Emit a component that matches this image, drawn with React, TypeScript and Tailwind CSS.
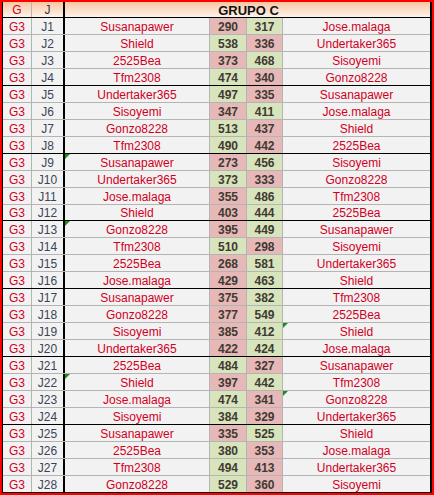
import React from "react";

type Row = [string, string, number, number, string, number];
// last field: triangle flags 1 = name1, 2 = name2
const rows: Row[] = [
  ["J1", "Susanapawer", 290, 317, "Jose.malaga", 0],
  ["J2", "Shield", 538, 336, "Undertaker365", 0],
  ["J3", "2525Bea", 373, 468, "Sisoyemi", 0],
  ["J4", "Tfm2308", 474, 340, "Gonzo8228", 0],
  ["J5", "Undertaker365", 497, 335, "Susanapawer", 0],
  ["J6", "Sisoyemi", 347, 411, "Jose.malaga", 0],
  ["J7", "Gonzo8228", 513, 437, "Shield", 0],
  ["J8", "Tfm2308", 490, 442, "2525Bea", 0],
  ["J9", "Susanapawer", 273, 456, "Sisoyemi", 1],
  ["J10", "Undertaker365", 373, 333, "Gonzo8228", 0],
  ["J11", "Jose.malaga", 355, 486, "Tfm2308", 0],
  ["J12", "Shield", 403, 444, "2525Bea", 0],
  ["J13", "Gonzo8228", 395, 449, "Susanapawer", 1],
  ["J14", "Tfm2308", 510, 298, "Sisoyemi", 0],
  ["J15", "2525Bea", 268, 581, "Undertaker365", 0],
  ["J16", "Jose.malaga", 429, 463, "Shield", 0],
  ["J17", "Susanapawer", 375, 382, "Tfm2308", 0],
  ["J18", "Gonzo8228", 377, 549, "2525Bea", 0],
  ["J19", "Sisoyemi", 385, 412, "Shield", 2],
  ["J20", "Undertaker365", 422, 424, "Jose.malaga", 0],
  ["J21", "2525Bea", 484, 327, "Susanapawer", 0],
  ["J22", "Shield", 397, 442, "Tfm2308", 1],
  ["J23", "Jose.malaga", 474, 341, "Gonzo8228", 2],
  ["J24", "Sisoyemi", 384, 329, "Undertaker365", 0],
  ["J25", "Susanapawer", 335, 525, "Shield", 0],
  ["J26", "2525Bea", 380, 353, "Jose.malaga", 0],
  ["J27", "Tfm2308", 494, 413, "Undertaker365", 0],
  ["J28", "Gonzo8228", 529, 360, "Sisoyemi", 0],
];

const Tri = () => (
  <span className="absolute left-0 top-0 w-0 h-0 border-t-[5px] border-r-[5px] border-t-[#1f8a1f] border-r-transparent" />
);

export default function App() {
  return (
    <div
      className="w-[434px] h-[495px] overflow-hidden bg-[#f2f2f2] border-2 border-[#ff0000]"
      style={{ fontFamily: '"Liberation Sans", Arial, sans-serif' }}
    >
      <div className="h-full border-l border-r-2 border-b border-black flex flex-col">
        {/* header */}
        <div className="flex h-[16px] shrink-0 border-b border-black bg-gradient-to-b from-[#f8c6a2] to-[#fdf3ec] text-[12px] leading-none">
          <div className="w-[29px] shrink-0 border-r border-[#b4b4b4] flex items-center justify-center text-[#d0001e] pt-[1px]">G</div>
          <div className="w-[33px] shrink-0 border-r-2 border-black flex items-center justify-center text-[#2f3a48] pt-[1px]">J</div>
          <div className="flex-1 flex items-center justify-center font-bold text-[#111] text-[13px] pl-[2px] pt-[1px]">GRUPO C</div>
        </div>
        {rows.map((r, i) => {
          const [j, n1, s1, s2, n2, tri] = r;
          const groupEnd = (i + 1) % 4 === 0 && i !== rows.length - 1;
          const last = i === rows.length - 1;
          const h = j === "J12" || j === "J28" ? "h-[16px]" : "h-[17px]";
          const border = last ? "" : groupEnd ? "border-b border-black" : "border-b border-[#b4b4b4]";
          const c1 = s1 > s2 ? "bg-[#d8e4bc]" : "bg-[#e6b8b7]";
          const c2 = s2 > s1 ? "bg-[#d8e4bc]" : "bg-[#e6b8b7]";
          return (
            <div key={j} className={`flex shrink-0 ${h} ${border} text-[12px] leading-none`}>
              <div className="w-[29px] shrink-0 border-r border-[#b4b4b4] flex items-center justify-center text-[#d0001e] pt-[1px]">G3</div>
              <div className="w-[33px] shrink-0 border-r-2 border-black flex items-center justify-center text-[#3a4656] pt-[1px]">{j}</div>
              <div className="relative w-[145px] shrink-0 border-r border-[#b4b4b4] flex items-center justify-center text-[#d0001e] pt-[1px]">
                {tri === 1 && <Tri />}
                {n1}
              </div>
              <div className={`w-[37px] shrink-0 border-r border-[#b4b4b4] flex items-center justify-center font-bold text-[#3f3a33] pt-[1px] ${c1}`}>{s1}</div>
              <div className={`w-[36px] shrink-0 border-r border-[#b4b4b4] flex items-center justify-center font-bold text-[#3f3a33] pt-[1px] ${c2}`}>{s2}</div>
              <div className="relative flex-1 flex items-center justify-center text-[#d0001e] pt-[1px]">
                {tri === 2 && <Tri />}
                {n2}
              </div>
            </div>
          );
        })}
      </div>
    </div>
  );
}
